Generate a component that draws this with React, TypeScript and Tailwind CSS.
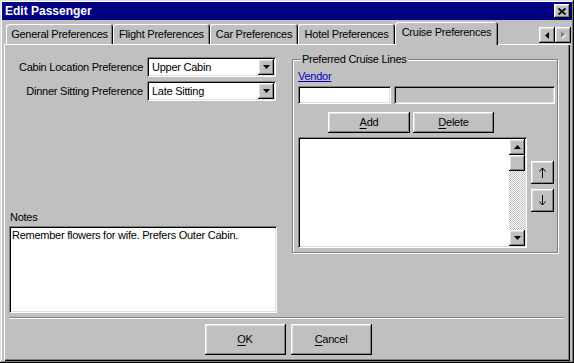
import React from "react";

// win9x bevels
const raised =
  "shadow-[inset_-1px_-1px_#000,inset_1px_1px_#fff,inset_-2px_-2px_#808080,inset_2px_2px_#dfdfdf]";
const sunken =
  "shadow-[inset_1px_1px_#808080,inset_-1px_-1px_#fff,inset_2px_2px_#000,inset_-2px_-2px_#dfdfdf]";

const DownArrow = () => (
  <svg width="7" height="4" viewBox="0 0 7 4">
    <polygon points="0,0 7,0 3.5,4" fill="#000" />
  </svg>
);

const UpArrow = () => (
  <svg width="7" height="4" viewBox="0 0 7 4">
    <polygon points="0,4 7,4 3.5,0" fill="#000" />
  </svg>
);

// thin arrow used on the reorder buttons
const MoveArrow = ({ down }: { down?: boolean }) => (
  <svg
    width="7"
    height="11"
    viewBox="0 0 7 11"
    className={down ? "rotate-180" : ""}
    shapeRendering="crispEdges"
  >
    <path d="M3.5 1 V11" stroke="#000" strokeWidth="1" />
    <path
      d="M0.5 4.5 L3.5 1 L6.5 4.5"
      stroke="#000"
      strokeWidth="1"
      fill="none"
      shapeRendering="geometricPrecision"
    />
  </svg>
);

const Select = ({ value }: { value: string }) => (
  <div
    className={`h-[20px] w-[129px] bg-white flex items-center p-[2px] ${sunken}`}
  >
    <span className="flex-1 pl-[3px]">{value}</span>
    <div
      className={`w-[16px] h-[16px] bg-[#c0c0c0] flex items-center justify-center ${raised}`}
    >
      <DownArrow />
    </div>
  </div>
);

const tabs = [
  { label: "General Preferences", w: "w-[107px]" },
  { label: "Flight Preferences", w: "w-[97px]" },
  { label: "Car Preferences", w: "w-[88px]" },
  { label: "Hotel Preferences", w: "w-[97px]" },
];

const Button = ({
  mnemonic,
  rest,
  className,
}: {
  mnemonic: string;
  rest: string;
  className: string;
}) => (
  <button
    className={`bg-[#c0c0c0] flex items-center justify-center ${raised} ${className}`}
  >
    <span>
      <span className="underline underline-offset-2">{mnemonic}</span>
      {rest}
    </span>
  </button>
);

export default function App() {
  return (
    <div
      className={`w-[574px] h-[363px] bg-[#c0c0c0] p-[2px] flex flex-col text-black text-[11px] leading-[13px] tracking-[-0.25px] font-['Liberation_Sans',Arial,sans-serif] shadow-[inset_-1px_-1px_#000,inset_1px_1px_#dfdfdf,inset_-2px_-2px_#808080,inset_2px_2px_#fff] overflow-hidden`}
    >
      {/* title bar */}
      <div className="h-[18px] bg-[#000080] flex items-center justify-between pl-[3px] pr-[2px] shrink-0">
        <span className="text-white font-bold text-[12px] tracking-normal">
          Edit Passenger
        </span>
        <div
          className={`w-[16px] h-[14px] bg-[#c0c0c0] flex items-center justify-center ${raised}`}
        >
          <svg width="8" height="7" viewBox="0 0 8 7">
            <path
              d="M0.5 0.5 L7.5 6.5 M7.5 0.5 L0.5 6.5"
              stroke="#000"
              strokeWidth="1.8"
            />
          </svg>
        </div>
      </div>

      {/* tab strip */}
      <div className="h-[24px] flex items-end pl-[4px] pr-[1px] shrink-0">
        {tabs.map((t) => (
          <div
            key={t.label}
            className={`${t.w} h-[20px] flex items-center justify-center rounded-t-[3px] shadow-[inset_1px_1px_#fff,inset_-1px_0_#000,inset_-2px_0_#808080]`}
          >
            {t.label}
          </div>
        ))}
        <div className="relative z-10 w-[103px] h-[23px] -mb-px bg-[#c0c0c0] flex items-center justify-center pb-[2px] rounded-t-[3px] shadow-[inset_1px_1px_#fff,inset_-1px_0_#000,inset_-2px_0_#808080]">
          Cruise Preferences
        </div>
        <div className="ml-auto mb-[1px] flex">
          <div
            className={`w-[16px] h-[16px] flex items-center justify-center ${raised}`}
          >
            <svg width="4" height="7" viewBox="0 0 4 7">
              <polygon points="4,0 4,7 0,3.5" fill="#000" />
            </svg>
          </div>
          <div
            className={`w-[16px] h-[16px] flex items-center justify-center ${raised}`}
          >
            <svg width="5" height="8" viewBox="0 0 5 8">
              <polygon points="1,1 1,8 5,4.5" fill="#fff" />
              <polygon points="0,0 0,7 4,3.5" fill="#808080" />
            </svg>
          </div>
        </div>
      </div>

      {/* tab panel */}
      <div className="flex-1 mx-[2px] flex flex-col pt-px pl-[5px] pr-[6px] shadow-[inset_1px_1px_#fff,inset_-1px_-1px_#000,inset_-2px_-2px_#808080]">
        <div className="h-[272px] flex">
          {/* left column */}
          <div className="w-[268px] flex flex-col pt-[12px] pb-[4px]">
            <div className="flex items-center h-[20px]">
              <span className="w-[138px] pr-[4px] text-right">
                Cabin Location Preference
              </span>
              <Select value="Upper Cabin" />
            </div>
            <div className="flex items-center h-[20px] mt-[4px]">
              <span className="w-[138px] pr-[4px] text-right">
                Dinner Sitting Preference
              </span>
              <Select value="Late Sitting" />
            </div>
            <div className="flex-1" />
            <span className="pl-px">Notes</span>
            <div
              className={`mt-[2px] h-[87px] bg-white p-[2px] pl-[3px] ${sunken}`}
            >
              <div className="pt-px">
                Remember flowers for wife. Prefers Outer Cabin.
              </div>
            </div>
          </div>

          {/* group box */}
          <div className="ml-[15px] pt-[14px]">
            <div className="relative w-[266px] h-[194px] border border-[#808080] shadow-[inset_1px_1px_#fff,1px_1px_#fff] pl-[5px] pt-[10px]">
              <span className="absolute -top-[7px] left-[8px] px-px bg-[#c0c0c0]">
                Preferred Cruise Lines
              </span>
              <div className="h-[13px]">
                <span className="text-[#0000c0] underline">Vendor</span>
              </div>
              <div className="flex gap-[3px] mt-[3px]">
                <div className={`w-[93px] h-[18px] bg-white ${sunken}`} />
                <div className={`w-[161px] h-[18px] bg-[#c0c0c0] ${sunken}`} />
              </div>
              <div className="flex gap-[3px] mt-[8px] ml-[30px]">
                <Button mnemonic="A" rest="dd" className="w-[82px] h-[21px]" />
                <Button mnemonic="D" rest="elete" className="w-[81px] h-[21px]" />
              </div>
              <div className="flex mt-[4px]">
                <div
                  className={`w-[229px] h-[111px] bg-white p-[2px] flex justify-end ${sunken}`}
                >
                  <div className="w-[16px] flex flex-col">
                    <div
                      className={`h-[16px] bg-[#c0c0c0] flex items-center justify-center ${raised}`}
                    >
                      <UpArrow />
                    </div>
                    <div className={`h-[16px] bg-[#c0c0c0] ${raised}`} />
                    <div className="flex-1 bg-[image:repeating-conic-gradient(#ffffff_0%_25%,#c0c0c0_0%_50%)] bg-[length:2px_2px]" />
                    <div
                      className={`h-[16px] bg-[#c0c0c0] flex items-center justify-center ${raised}`}
                    >
                      <DownArrow />
                    </div>
                  </div>
                </div>
                <div className="ml-[4px] mt-[24px] flex flex-col gap-[5px]">
                  <div
                    className={`w-[23px] h-[23px] flex items-center justify-center ${raised}`}
                  >
                    <MoveArrow />
                  </div>
                  <div
                    className={`w-[23px] h-[23px] flex items-center justify-center ${raised}`}
                  >
                    <MoveArrow down />
                  </div>
                </div>
              </div>
            </div>
          </div>
        </div>

        {/* separator */}
        <div className="h-[2px] border-t border-[#808080] border-b border-b-white" />

        <div className="flex justify-center gap-[5px] mt-[5px] pl-[3px]">
          <Button mnemonic="O" rest="K" className="w-[81px] h-[31px]" />
          <Button mnemonic="C" rest="ancel" className="w-[81px] h-[31px]" />
        </div>
      </div>
    </div>
  );
}
